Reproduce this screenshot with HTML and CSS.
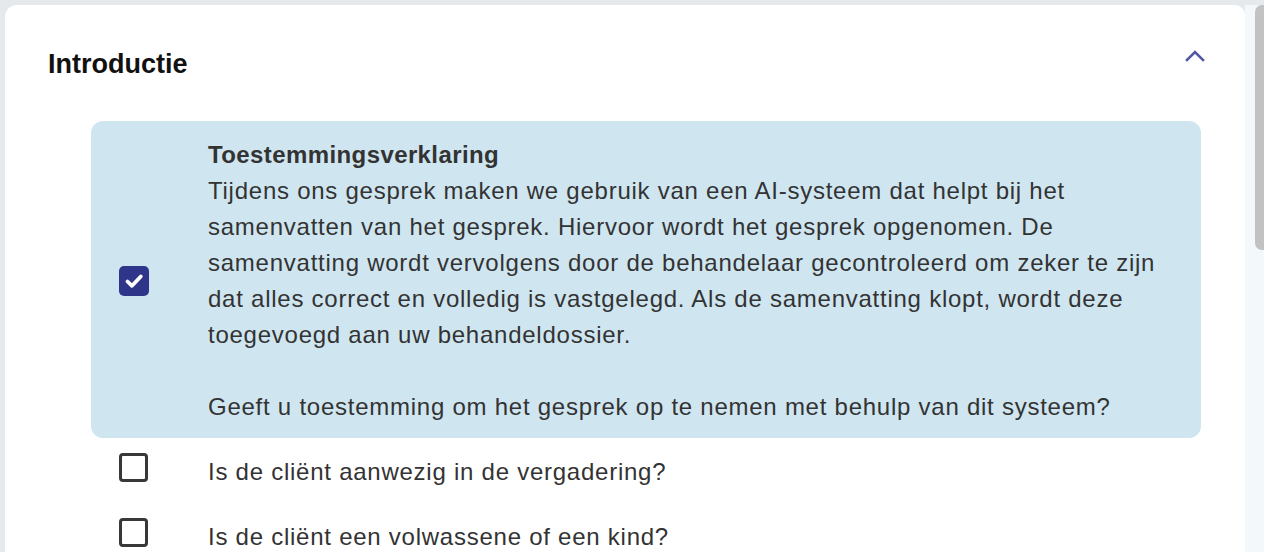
FILE: index.html
```html
<!DOCTYPE html>
<html lang="nl">
<head>
<meta charset="utf-8">
<title>Introductie</title>
<link rel="stylesheet" href="styles.css">
</head>
<body>
<div class="page">
  <div class="card">
    <div class="section-header">
      <h2 class="section-title">Introductie</h2>
      <button class="toggle" type="button" aria-label="Inklappen">
        <svg width="20" height="14" viewBox="0 0 20 14"><path d="M2 12 L10 4 L18 12" fill="none" stroke="#5258a6" stroke-width="2.6" stroke-linecap="square"/></svg>
      </button>
    </div>
    <ul class="items">
      <li class="item item--checked">
        <span class="check-col"><span class="checkbox checkbox--checked"><svg width="30" height="30" viewBox="0 0 30 30"><path d="M8.5 15.5 L13 19.8 L21.8 10.5" fill="none" stroke="#fff" stroke-width="3.8" stroke-linecap="round" stroke-linejoin="round"/></svg></span></span>
        <div class="item-text">
          <strong class="item-title">Toestemmingsverklaring</strong>
          <p class="para">Tijdens ons gesprek maken we gebruik van een AI-systeem dat helpt bij het samenvatten van het gesprek. Hiervoor wordt het gesprek opgenomen. De samenvatting wordt vervolgens door de behandelaar gecontroleerd om zeker te zijn dat alles correct en volledig is vastgelegd. Als de samenvatting klopt, wordt deze toegevoegd aan uw behandeldossier.</p>
          <p class="para para--gap">Geeft u toestemming om het gesprek op te nemen met behulp van dit systeem?</p>
        </div>
      </li>
      <li class="item">
        <span class="check-col"><span class="checkbox"></span></span>
        <div class="item-text">Is de cliënt aanwezig in de vergadering?</div>
      </li>
      <li class="item">
        <span class="check-col"><span class="checkbox"></span></span>
        <div class="item-text">Is de cliënt een volwassene of een kind?</div>
      </li>
    </ul>
  </div>
  <div class="scrollbar"><div class="thumb"></div></div>
</div>
</body>
</html>
```
FILE: styles.css
```css
html, body {
  margin: 0;
  padding: 0;
  height: 552px;
  overflow: hidden;
  background: #e5e9ec;
}
.page {
  display: flex;
  height: 547px;
  padding: 5px 0 0 5px;
  font-family: "Liberation Sans", Arial, sans-serif;
  color: #333;
}
.card {
  flex: 1;
  background: #fff;
  border-radius: 12px 10px 0 0;
  overflow: hidden;
}
.section-header {
  display: flex;
  justify-content: space-between;
  align-items: flex-start;
  padding: 43px 40px 0 43px;
}
.section-title {
  margin: 0;
  font-size: 27px;
  line-height: 32px;
  font-weight: bold;
  color: #111;
}
.toggle {
  border: 0;
  background: none;
  padding: 0;
  display: block;
}
.toggle svg { display: block; }
.items {
  list-style: none;
  margin: 41px 44px 0 86px;
  padding: 0;
}
.item {
  display: flex;
  align-items: flex-start;
  padding: 16px 33px 13px 28px;
  font-size: 24px;
  line-height: 36px;
  letter-spacing: 0.75px;
}
.item--checked {
  align-items: center;
  background: #cfe6f1;
  border-radius: 12px;
}
.check-col {
  flex: 0 0 30px;
  margin-right: 59px;
  display: flex;
}
.checkbox {
  box-sizing: border-box;
  width: 29px;
  height: 29px;
  border: 3px solid #383838;
  border-radius: 4px;
  margin-top: -1px;
}
.checkbox--checked {
  width: 30px;
  height: 30px;
  border: 0;
  border-radius: 5px;
  background: #2f368a;
  margin-top: 0;
}
.checkbox--checked svg { display: block; }
.item-text {
  flex: 1;
}
.item-title {
  display: block;
  font-weight: bold;
  letter-spacing: 0.4px;
}
.para {
  margin: 0;
}
.para--gap {
  margin-top: 36px;
}
.scrollbar {
  flex: 0 0 19px;
  background: #f3f8fb;
}
.thumb {
  margin-left: 10px;
  width: 9px;
  height: 245px;
  background: #c2c2c2;
  border-radius: 7px 0 0 7px;
}
```
